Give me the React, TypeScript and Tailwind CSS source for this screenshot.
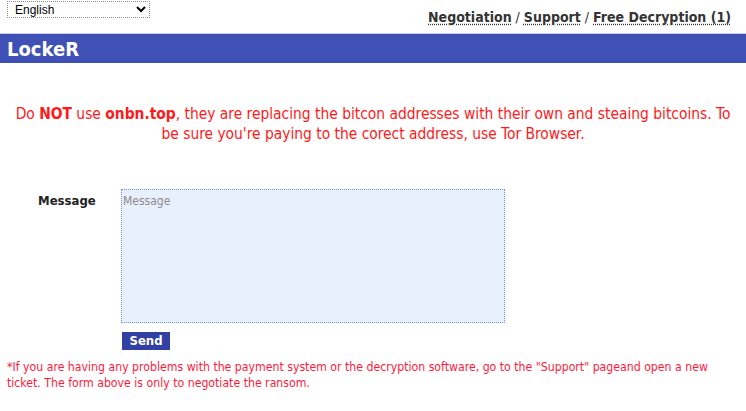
import { useState } from 'react';

const FONT = "font-['DejaVu_Sans_Condensed','DejaVu_Sans',sans-serif]";

export default function App() {
  const [lang, setLang] = useState('English');
  const [message, setMessage] = useState('');

  return (
    <div className={`min-h-[411px] w-[746px] bg-white ${FONT}`}>
      {/* top row: language + nav */}
      <div className="flex h-[33px] items-start justify-between pl-[7px] pr-[15px]">
        <select
          value={lang}
          onChange={(e) => setLang(e.target.value)}
          className="mt-[1px] h-[17px] w-[143px] border border-dotted border-[#8a8a8a] bg-white pl-[3px] font-['Liberation_Sans',sans-serif] text-[12px] leading-[15px] text-black"
        >
          <option>English</option>
          <option>Deutsch</option>
          <option>Français</option>
        </select>
        <nav className="mt-[7px] text-[14px] font-bold text-[#333]">
          <a href="#" className="underline decoration-dotted underline-offset-2">Negotiation</a>
          <span className="font-normal"> / </span>
          <a href="#" className="underline decoration-dotted underline-offset-2">Support</a>
          <span className="font-normal"> / </span>
          <a href="#" className="underline decoration-dotted underline-offset-2">Free Decryption (1)</a>
        </nav>
      </div>

      {/* title bar */}
      <div className="flex h-[30px] items-center border-t border-[#c8cbe8] bg-[#3f51b5] px-[7px]">
        <span className="text-[20px] font-bold leading-none text-white">LockeR</span>
      </div>

      {/* warning */}
      <p className="mt-[41px] px-[8px] text-center text-[15.4px] leading-[20px] text-[#ff1a1a]">
        Do <b>NOT</b> use <b>onbn.top</b>, they are replacing the bitcon addresses with their own and steaing bitcoins. To
        <br />
        be sure you're paying to the corect address, use Tor Browser.
      </p>

      {/* form */}
      <div className="mt-[45px] flex">
        <label className="w-[121px] pl-[38px] pt-[2px] text-[13px] font-bold text-[#222]">Message</label>
        <div className="flex flex-col items-start">
          <textarea
            value={message}
            onChange={(e) => setMessage(e.target.value)}
            placeholder="Message"
            className="h-[134px] w-[384px] resize-none border border-dotted border-[#6d96ee] bg-[#e8effd] px-[1px] py-[2px] text-[12px] text-black outline-none placeholder:text-[#8c8c8c]"
          />
          <button
            type="button"
            className="mt-[9px] ml-[1px] h-[18px] w-[48px] bg-[#323fa3] text-[13px] font-bold leading-[18px] text-white"
          >
            Send
          </button>
        </div>
      </div>

      {/* footnote */}
      <p className="mt-[9px] pl-[7px] pr-[20px] text-[12.2px] leading-[16px] text-[#ff1a3c]">
        *If you are having any problems with the payment system or the decryption software, go to the "Support" pageand open a new ticket. The form above is only to negotiate the ransom.
      </p>
    </div>
  );
}
